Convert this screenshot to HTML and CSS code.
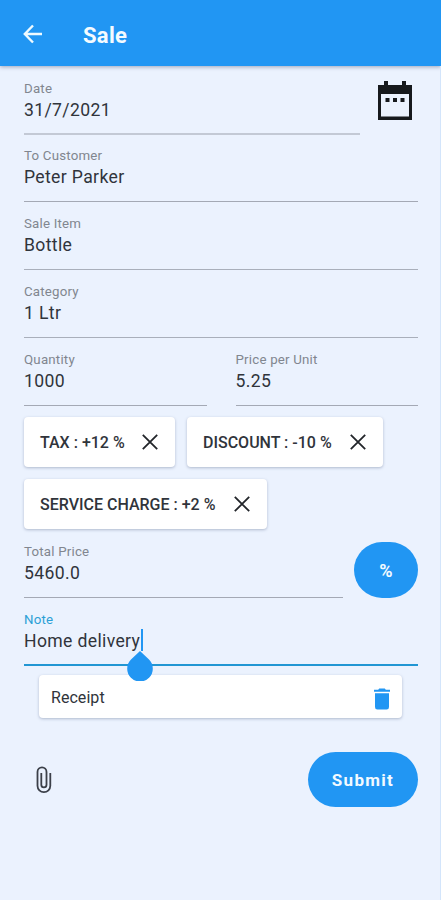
FILE: index.html
```html
<!DOCTYPE html>
<html lang="en">
<head>
<meta charset="utf-8">
<title>Sale</title>
<link rel="stylesheet" href="styles.css">
</head>
<body>
<header class="bar">
  <svg class="back" viewBox="0 0 20 20"><path d="M19 10H2M10 1.5L1.8 10L10 18.5"/></svg>
  <h1>Sale</h1>
</header>
<main>
  <div class="row date-row">
    <div class="field date"><label>Date</label><span class="value">31/7/2021</span></div>
    <svg class="calendar" viewBox="0 0 36 40"><path fill-rule="evenodd" d="M1 4H7V0H11V4H25V0H29V4H35V39H1ZM4 13V35.5H32V13Z"/><path d="M8.5 17h4v4h-4zM16 17h4v4h-4zM23.5 17h4v4h-4z"/></svg>
  </div>
  <div class="field customer"><label>To Customer</label><span class="value">Peter Parker</span></div>
  <div class="field soft"><label>Sale Item</label><span class="value">Bottle</span></div>
  <div class="field soft"><label>Category</label><span class="value">1 Ltr</span></div>
  <div class="row pair">
    <div class="field"><label>Quantity</label><span class="value">1000</span></div>
    <div class="field"><label>Price per Unit</label><span class="value">5.25</span></div>
  </div>
  <div class="chips">
    <div class="chip tax"><span>TAX : +12 %</span><svg viewBox="0 0 16 16"><path d="M.8.8L15.2 15.2M15.2.8L.8 15.2"/></svg></div>
    <div class="chip discount"><span>DISCOUNT : -10 %</span><svg viewBox="0 0 16 16"><path d="M.8.8L15.2 15.2M15.2.8L.8 15.2"/></svg></div>
    <div class="chip service"><span>SERVICE CHARGE : +2 %</span><svg viewBox="0 0 16 16"><path d="M.8.8L15.2 15.2M15.2.8L.8 15.2"/></svg></div>
  </div>
  <div class="row total-row">
    <div class="field total"><label>Total Price</label><span class="value">5460.0</span></div>
    <button class="percent">%</button>
  </div>
  <div class="field note"><label>Note</label><span class="value">Home delivery<i class="caret"><svg class="handle" viewBox="0 0 26 30"><path d="M13 0L22 8.6A12.8 12.8 0 1 1 4 8.6Z"/></svg></i></span></div>
  <div class="receipt"><span>Receipt</span>
    <svg class="trash" viewBox="0 0 18 22"><path d="M1 1.8H5.2L6.2.6H11.8L12.8 1.8H17V3.8H1ZM2 5.2H16V19Q16 21.5 13.6 21.5H4.4Q2 21.5 2 19Z"/></svg>
  </div>
  <footer class="row actions">
    <svg class="clip" viewBox="0 0 16 28"><path d="M14.3 7V19.8A6.4 6.4 0 0 1 1.5 19.8V5.9A4.5 4.5 0 0 1 10.5 5.9V18.7A2.6 2.6 0 0 1 5.3 18.7V7"/></svg>
    <button class="submit">Submit</button>
  </footer>
</main>
</body>
</html>
```

FILE: styles.css
```css
* { box-sizing: border-box; }
body {
  margin: 0;
  height: 900px;
  overflow: hidden;
  background: #ebf2fe;
  font-family: Roboto, sans-serif;
  color: #30343b;
}
.bar {
  height: 66px;
  padding: 3px 0 0 23px;
  display: flex;
  align-items: center;
  background: #2196f3;
  color: #f4fbff;
  box-shadow: 0 1px 4px rgba(40, 50, 90, .4);
}
.bar h1 { margin: 2px 0 0 40px; font-size: 22px; font-weight: 700; line-height: 26px; letter-spacing: .3px; }
.back { width: 20px; height: 20px; margin-top: -2px; fill: none; stroke: #eefaff; stroke-width: 2.4; }
main { height: 834px; padding: 0 22px 0 24px; border-right: 1px solid #d3e5fb; }
.row { display: flex; }
.field {
  height: 68px;
  padding-top: 14px;
  border-bottom: 1px solid #a4a9b5;
}
.field label {
  display: block;
  height: 17px;
  font-size: 13.3px;
  line-height: 16px;
  letter-spacing: .2px;
  color: #81868f;
}
.value {
  display: inline-block;
  position: relative;
  font-size: 17.6px;
  line-height: 24px;
  letter-spacing: .35px;
  white-space: nowrap;
}
.date-row { justify-content: space-between; }
.date { width: 336px; height: 69px; padding-top: 15px; border-bottom: 2px solid #c3c9d5; }
.calendar { width: 36px; height: 40px; margin: 15px 5px 0 0; fill: #16191d; }
.customer { height: 67px; padding-top: 13px; }
.soft { border-bottom-color: #a9afbb; }
.pair { gap: 29px; }
.pair .field { flex: 1; }
.chips { display: flex; flex-wrap: wrap; gap: 12px; padding-top: 11px; }
.chip {
  height: 50px;
  padding: 0 17px 0 16px;
  display: flex;
  align-items: center;
  justify-content: space-between;
  border-radius: 4px;
  background: #fff;
  box-shadow: 0 1px 3px rgba(60, 75, 110, .34);
  font-size: 16px;
  font-weight: 500;
  white-space: nowrap;
}
.chip svg { width: 16px; height: 16px; flex: none; fill: none; stroke: #22252a; stroke-width: 1.8; }
.tax { width: 151px; }
.discount { width: 196px; }
.service { width: 243px; }
.total-row { justify-content: space-between; padding-top: 1px; }
.total { width: 319px; }
button { border: 0; padding: 0; background: #2196f3; color: #f2faff; font-family: inherit; }
.percent { width: 64px; height: 56px; margin-top: 12px; border-radius: 28px; font-size: 18px; font-weight: 700; }
.note { border-bottom: 2px solid #2196d3; }
.note label { color: #2b9fd6; }
.caret { position: absolute; left: 117px; top: 0; width: 2px; height: 22px; background: #2196f3; }
.handle { position: absolute; left: -14px; top: 22px; width: 26px; height: 30px; fill: #2196f3; z-index: 2; }
.receipt {
  height: 43px;
  margin: 9px 16px 0 15px;
  padding: 2px 11px 0 12px;
  display: flex;
  align-items: center;
  justify-content: space-between;
  border-radius: 4px;
  background: #fff;
  box-shadow: 0 1px 3px rgba(60, 75, 110, .34);
  font-size: 16px;
  letter-spacing: .05px;
}
.trash { width: 18px; height: 22px; fill: #2196f3; margin-top: 2px; }
.actions { align-items: center; justify-content: space-between; padding-top: 34px; }
.clip { width: 16px; height: 28px; margin-left: 12px; fill: none; stroke: #3c4049; stroke-width: 1.8; }
.submit { width: 110px; height: 55px; border-radius: 28px; font-size: 17px; font-weight: 700; letter-spacing: 1.3px; }
```
